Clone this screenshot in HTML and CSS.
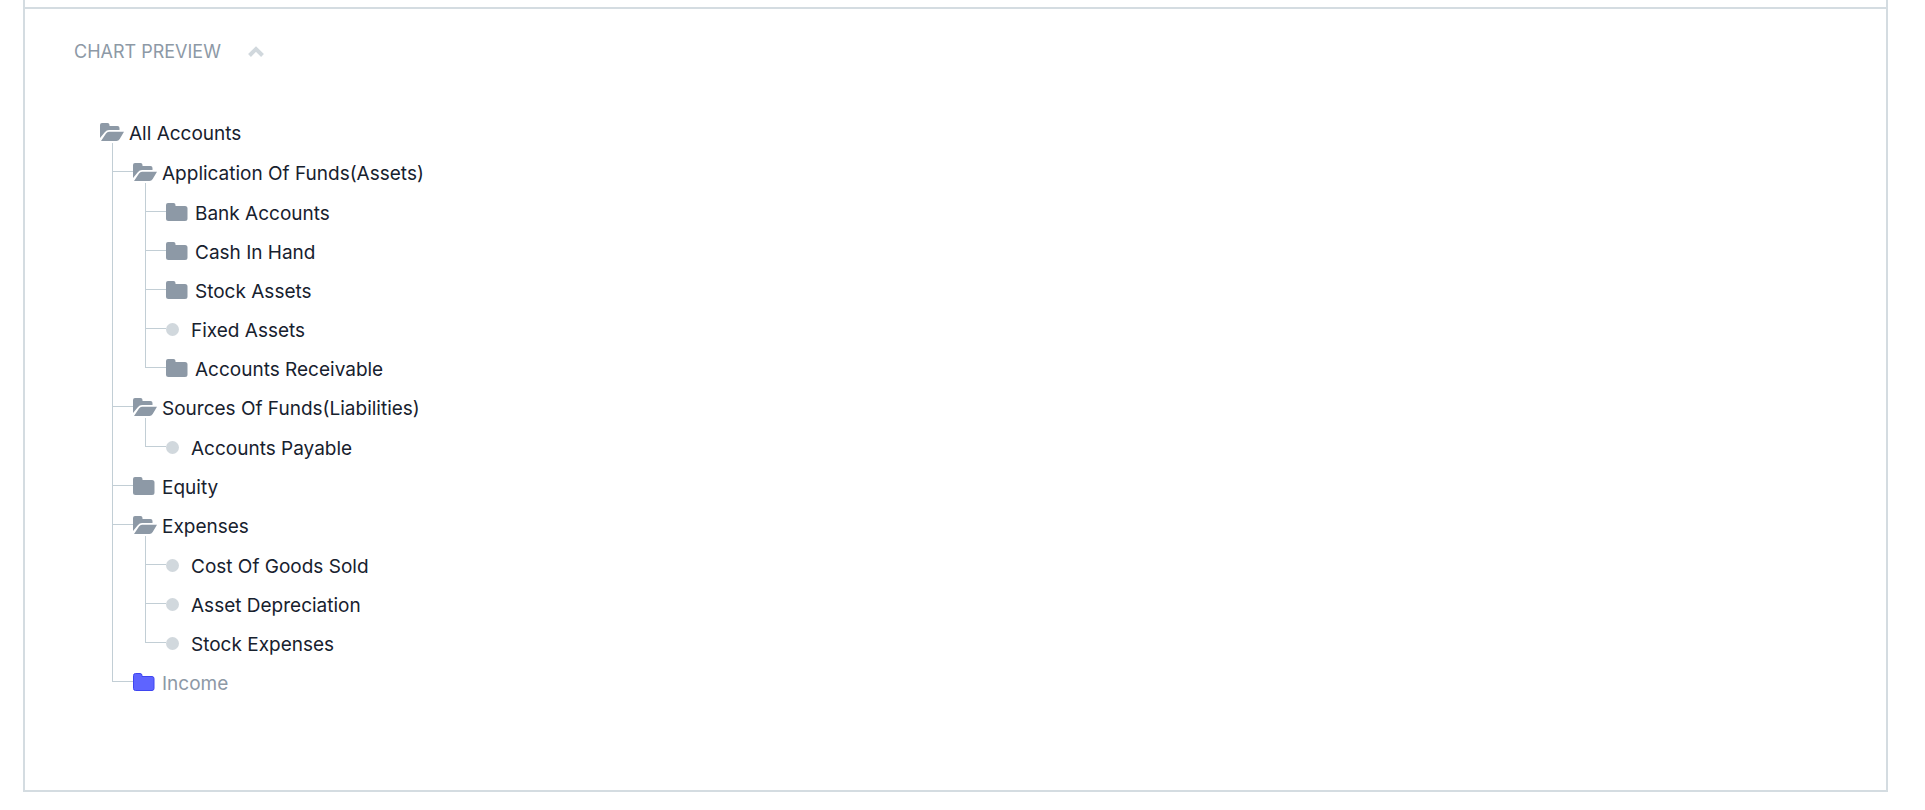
FILE: index.html
```html
<!DOCTYPE html>
<html lang="en">
<head>
    <meta charset="UTF-8">
    <meta name="viewport" content="width=device-width, initial-scale=1.0">
    <title>Chart Preview</title>
    <link rel="stylesheet" href="styles.css">
</head>
<body>
    <!-- folder icons shared by the tree -->
    <svg class="sprite" aria-hidden="true">
        <symbol id="open" viewBox="0 0 24 18">
            <path d="M0 15V2Q0 0 2 0H7.500Q9.500 0 9.500 2V3H17.500Q19.500 3 19.500 5V7H9Q6.500 7 5 9Z"/>
            <path d="M1 18L6 10.500Q7.200 8.700 9 8.700H24L19.700 16Q18.500 18 16.500 18Z"/>
        </symbol>
        <symbol id="closed" viewBox="0 0 24 18">
            <path d="M0 2Q0 0 2 0H7.500Q9.500 0 9.500 2V3H19Q21.500 3 21.500 5.500V15.500Q21.500 18 19 18H2.500Q0 18 0 15.500Z"/>
        </symbol>
        <symbol id="outlined" viewBox="0 0 24 18">
            <path d="M0.500 2.500Q0.500 0.500 2.500 0.500H7Q9 0.500 9 2.500V3.500H19Q21 3.500 21 5.500V15.500Q21 17.500 19 17.500H2.500Q0.500 17.500 0.500 15.500Z"/>
        </symbol>
    </svg>

    <main class="form">
        <div class="previous"></div>
        <section class="section">
            <button class="head" type="button" aria-expanded="true">
                <span>CHART PREVIEW</span>
                <svg class="chevron" viewBox="0 0 16 12"><path d="M1.500 9.500L8 3L14.500 9.500"/></svg>
            </button>

            <ul class="tree">
                <li>
                    <button class="node" type="button"><svg class="icon"><use href="#open"/></svg>All Accounts</button>
                    <ul>
                        <li>
                            <button class="node" type="button"><svg class="icon"><use href="#open"/></svg>Application Of Funds(Assets)</button>
                            <ul>
                                <li><button class="node" type="button"><svg class="icon"><use href="#closed"/></svg>Bank Accounts</button></li>
                                <li><button class="node" type="button"><svg class="icon"><use href="#closed"/></svg>Cash In Hand</button></li>
                                <li><button class="node" type="button"><svg class="icon"><use href="#closed"/></svg>Stock Assets</button></li>
                                <li><span class="node leaf"><i class="dot"></i>Fixed Assets</span></li>
                                <li><button class="node" type="button"><svg class="icon"><use href="#closed"/></svg>Accounts Receivable</button></li>
                            </ul>
                        </li>
                        <li>
                            <button class="node" type="button"><svg class="icon"><use href="#open"/></svg>Sources Of Funds(Liabilities)</button>
                            <ul>
                                <li><span class="node leaf"><i class="dot"></i>Accounts Payable</span></li>
                            </ul>
                        </li>
                        <li><button class="node" type="button"><svg class="icon"><use href="#closed"/></svg>Equity</button></li>
                        <li>
                            <button class="node" type="button"><svg class="icon"><use href="#open"/></svg>Expenses</button>
                            <ul>
                                <li><span class="node leaf"><i class="dot"></i>Cost Of Goods Sold</span></li>
                                <li><span class="node leaf"><i class="dot"></i>Asset Depreciation</span></li>
                                <li><span class="node leaf"><i class="dot"></i>Stock Expenses</span></li>
                            </ul>
                        </li>
                        <li><button class="node selected" type="button"><svg class="icon"><use href="#outlined"/></svg>Income</button></li>
                    </ul>
                </li>
            </ul>
        </section>
    </main>
</body>
</html>
```
FILE: styles.css
```css
*{padding: 0; margin: 0; box-sizing: border-box;}
ul{list-style: none;}

body{
    background-color: #fff;
    font-family: Inter, "Liberation Sans", sans-serif;
    font-size: 19px;
    color: #17212e;
}
button{
    border: none;
    background: none;
    font: inherit;
    color: inherit;
    cursor: pointer;
}
.sprite{
    display: block;
    width: 0;
    height: 0;
}

.form{
    margin: 0 37px 0 23px;
    border: 2px solid #d4dce1;
    border-top: none;
}
.previous{
    height: 9px;
    border-bottom: 2px solid #d4dce1;
}
.section{
    padding: 31px 49px 87px;
}
.head{
    display: flex;
    align-items: center;
    gap: 27px;
    font-size: 18px;
    line-height: 24px;
    color: #8d99a6;
}
.chevron{
    width: 16px;
    height: 12px;
    fill: none;
    stroke: #d1d8dd;
    stroke-width: 4;
}

/* tree */
.tree{
    padding: 50px 0 0 26px;
}
.tree ul{
    padding: 1px 0 0 33px;
}
.tree li{
    position: relative;
}
.node{
    display: flex;
    align-items: center;
    gap: 5px;
    height: 39px;
    font-weight: 430;
    white-space: nowrap;
}
.leaf{
    gap: 12px;
}
.icon{
    position: relative;
    z-index: 1;
    width: 24px;
    height: 18px;
    margin-bottom: 4px;
    fill: #8d99a6;
}
.dot{
    width: 13px;
    height: 13px;
    margin-bottom: 3px;
    border-radius: 50%;
    background-color: #d1d8dd;
}
.selected{
    color: #8d99a6;
}
.selected .icon{
    fill: #5e64ff;
    stroke: #3f45f0;
    stroke-width: 1;
}

/* connector lines */
.tree ul > li::before,
.tree ul > li::after{
    content: "";
    position: absolute;
    left: -21px;
}
.tree ul > li::before{
    top: 0;
    bottom: 0;
    border-left: 1px solid #c2ced5;
}
.tree ul > li:first-child::before{
    top: -11px;
}
.tree ul > li:last-child::before{
    bottom: auto;
    height: 18px;
}
.tree ul > li:first-child:last-child::before{
    height: 29px;
}
.tree ul > li::after{
    top: 17px;
    width: 21px;
    border-top: 1px solid #c2ced5;
}
```
